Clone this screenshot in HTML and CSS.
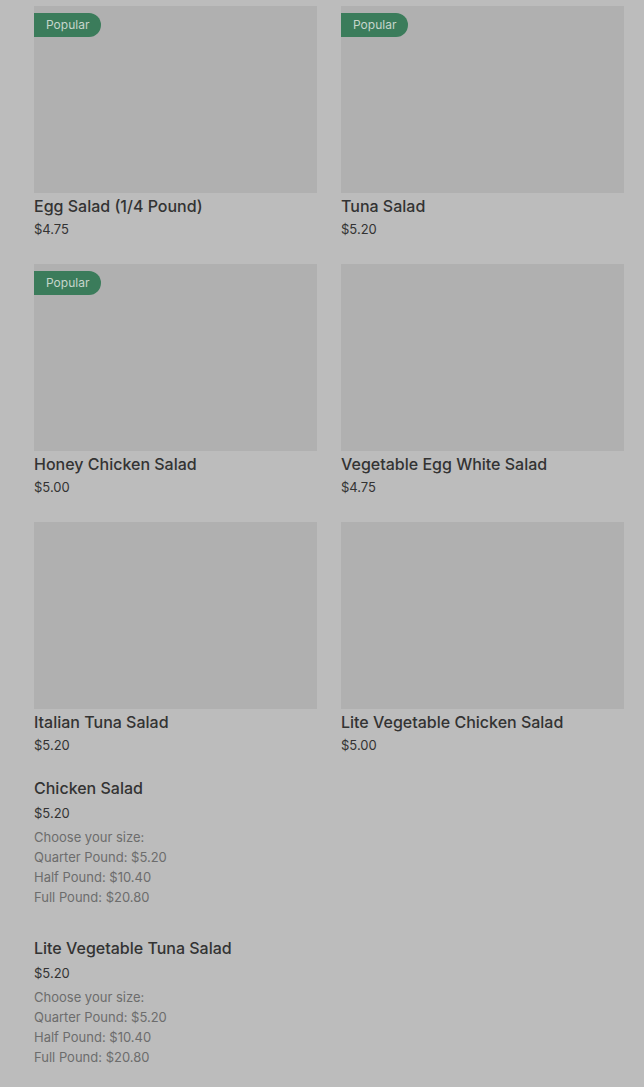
FILE: index.html
```html
<!DOCTYPE html>
<html>
<head>
<meta charset="utf-8">
<link rel="stylesheet" href="styles.css">
</head>
<body>
<div class="page">
  <div class="grid">
    <div class="card">
      <div class="thumb"><span class="badge">Popular</span></div>
      <div class="title">Egg Salad (1/4 Pound)</div>
      <div class="price">$4.75</div>
    </div>
    <div class="card">
      <div class="thumb"><span class="badge">Popular</span></div>
      <div class="title">Tuna Salad</div>
      <div class="price">$5.20</div>
    </div>
    <div class="card">
      <div class="thumb"><span class="badge">Popular</span></div>
      <div class="title">Honey Chicken Salad</div>
      <div class="price">$5.00</div>
    </div>
    <div class="card">
      <div class="thumb"></div>
      <div class="title">Vegetable Egg White Salad</div>
      <div class="price">$4.75</div>
    </div>
    <div class="card">
      <div class="thumb"></div>
      <div class="title">Italian Tuna Salad</div>
      <div class="price">$5.20</div>
    </div>
    <div class="card">
      <div class="thumb"></div>
      <div class="title">Lite Vegetable Chicken Salad</div>
      <div class="price">$5.00</div>
    </div>
  </div>
  <div class="list">
    <div class="item">
      <div class="title">Chicken Salad</div>
      <div class="price item-price">$5.20</div>
      <div class="desc">
        <div>Choose your size:</div>
        <div>Quarter Pound: $5.20</div>
        <div>Half Pound: $10.40</div>
        <div>Full Pound: $20.80</div>
      </div>
    </div>
    <div class="item">
      <div class="title">Lite Vegetable Tuna Salad</div>
      <div class="price item-price">$5.20</div>
      <div class="desc">
        <div>Choose your size:</div>
        <div>Quarter Pound: $5.20</div>
        <div>Half Pound: $10.40</div>
        <div>Full Pound: $20.80</div>
      </div>
    </div>
  </div>
</div>
</body>
</html>
```

FILE: styles.css
```css
html, body {
  margin: 0;
  padding: 0;
  background: #bcbcbc;
}
body {
  font-family: Inter, Roboto, "Liberation Sans", Arial, sans-serif;
  color: #313131;
}
.page {
  padding: 6px 20px 0 34px;
}
.grid {
  display: grid;
  grid-template-columns: 283px 283px;
  column-gap: 24px;
  row-gap: 26px;
}
.card {
  display: flex;
  flex-direction: column;
}
.thumb {
  position: relative;
  height: 187px;
  background: #b0b0b0;
}
.badge {
  position: absolute;
  left: 0;
  top: 7px;
  height: 24px;
  line-height: 24px;
  padding: 0 12px;
  background: #3b7c5b;
  color: #c6d6cc;
  font-size: 12px;
  border-radius: 0 12px 12px 0;
}
.title {
  font-size: 16px;
  font-weight: 500;
  line-height: 20px;
  margin-top: 3px;
  color: #333;
}
.price {
  font-size: 13px;
  line-height: 18px;
  margin-top: 4px;
  color: #333;
}
.list {
  display: flex;
  flex-direction: column;
  gap: 31px;
  padding-top: 24px;
}
.item .title {
  margin-top: 0;
}
.item-price {
  margin-top: 6px;
}
.desc {
  margin-top: 5px;
  font-size: 13px;
  line-height: 20px;
  color: #6c6c6c;
}
```
